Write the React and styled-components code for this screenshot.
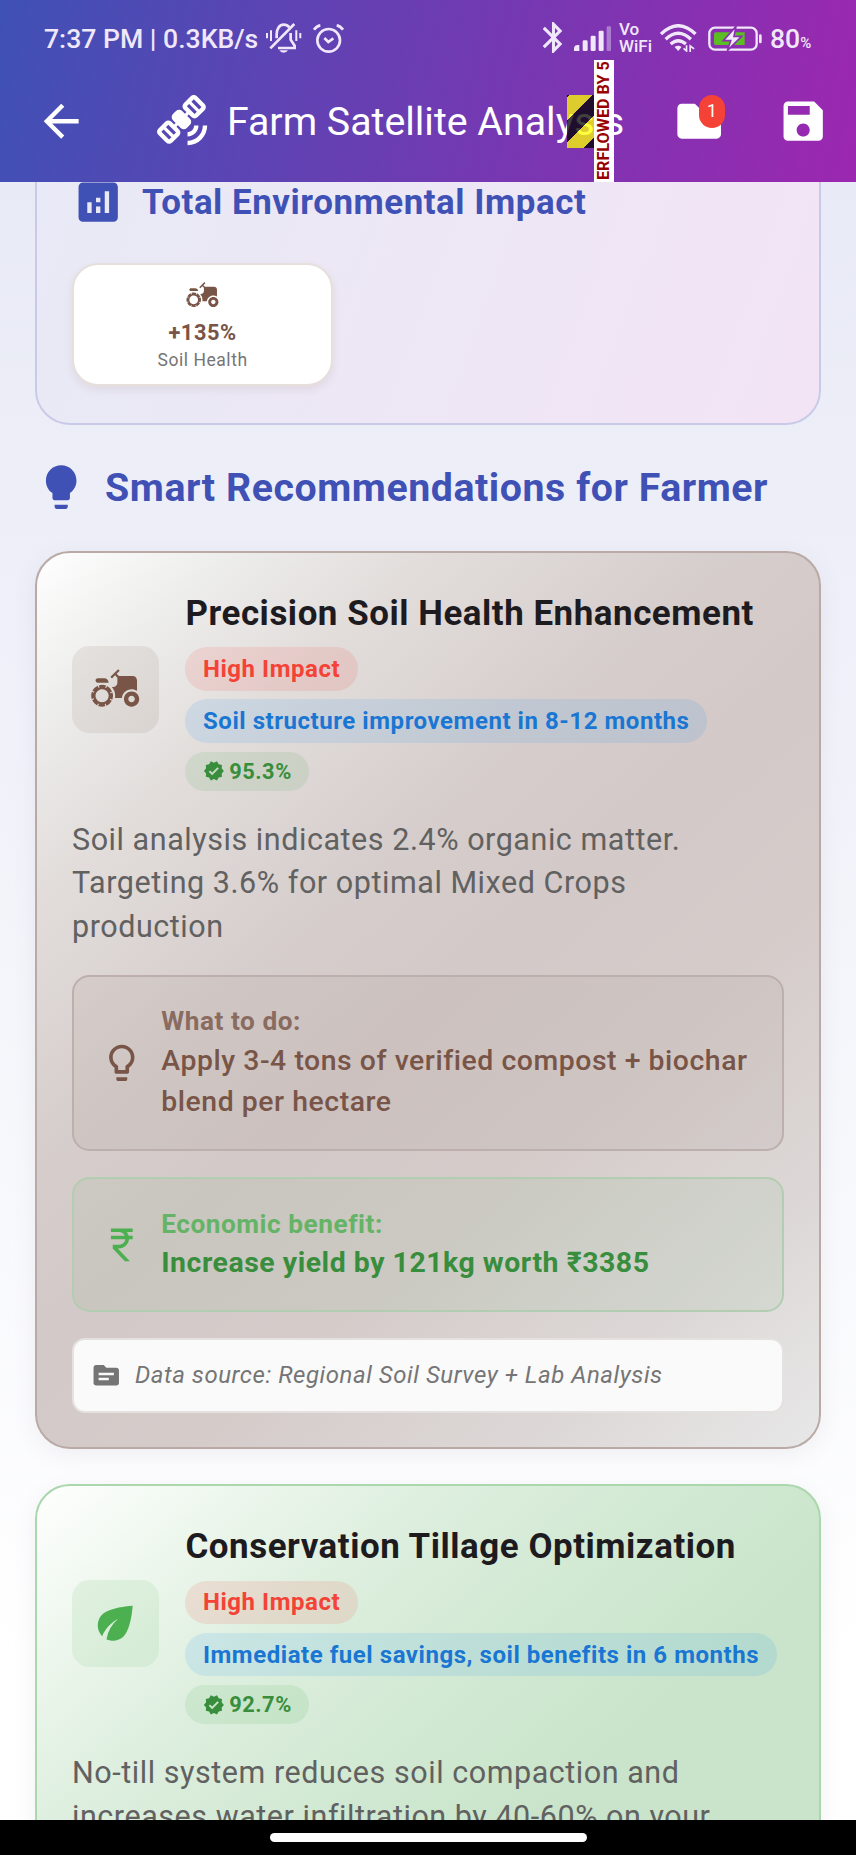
import styled, { createGlobalStyle } from "styled-components";
import {
    MdAgriculture, MdAnalytics, MdArrowBack, MdBluetooth, MdCurrencyRupee, MdEco,
    MdFolder, MdLightbulb, MdLightbulbOutline, MdSatelliteAlt, MdSave, MdSource, MdVerified,
} from "react-icons/md";

const GlobalStyle = createGlobalStyle`
    * { box-sizing: border-box; }
    body {
        margin: 0;
        font-family: Roboto, "Noto Sans", sans-serif;
        letter-spacing: 0.545px;
    }
    svg { display: block; flex: none; }
`;

const Screen = styled.div`
    width: 856px;
    height: 1855px;
    display: flex;
    flex-direction: column;
    overflow: hidden;
    background: #000;
`;

// header (status bar + app bar)
const Header = styled.header`
    flex: none;
    height: 182px;
    color: #fff;
    background: linear-gradient(102deg, #3f51b5, #9c27b0);
`;

const StatusBar = styled.div`
    height: 60px;
    padding: 17px 43px 0 44px;
    display: flex;
    justify-content: space-between;
    color: #f0e8fa;
    font-size: 26.6px;
    font-weight: 500;
    letter-spacing: 0;
`;

const StatusGroup = styled.div`
    height: 42px;
    display: flex;
    align-items: center;
    gap: ${(props) => props.$gap}px;
`;

const BluetoothIcon = styled(MdBluetooth)`
    margin: 0 -6px 2px 0;
`;

const VoWifi = styled.div`
    font-size: 17px;
    line-height: 17px;
    width: 34px;
`;

const Percent = styled.span`
    width: 43px;
    padding-top: 1px;
    font-size: 26.6px;
    white-space: nowrap;
    small { font-size: 15px; }
`;

const AppBar = styled.div`
    height: 122px;
    display: flex;
    align-items: center;
`;

const IconButton = styled.div`
    width: ${(props) => props.$width || 104.7}px;
    height: 104px;
    display: flex;
    align-items: center;
    justify-content: center;
    position: relative;
`;

const TitleRow = styled.div`
    position: relative;
    width: 456.5px;
    height: 122px;
    margin: 0 33.1px 0 35px;
    display: flex;
    align-items: center;
    gap: 17.5px;
`;

const Title = styled.h1`
    margin: 0;
    padding-top: 2px;
    font-size: 39.3px;
    font-weight: 400;
    letter-spacing: 0;
    white-space: nowrap;
`;

const OverflowStripes = styled.div`
    position: absolute;
    right: 19px;
    top: 35px;
    width: 28px;
    height: 53px;
    background: linear-gradient(135deg,
        rgba(0, 0, 0, 0.75) 1.5px, rgba(255, 255, 0, 0.75) 1.5px 17.9px,
        rgba(0, 0, 0, 0.75) 17.9px 33.4px, rgba(255, 255, 0, 0.75) 33.4px 49.4px,
        rgba(0, 0, 0, 0.75) 49.4px);
`;

const OverflowLabel = styled.div`
    position: absolute;
    right: 0;
    top: 0;
    width: 20px;
    height: 122px;
    overflow: hidden;
    background: #fff;
    color: #900;
    font-size: 16.2px;
    font-weight: 700;
    line-height: 20px;
    letter-spacing: 0;
    white-space: nowrap;
    writing-mode: vertical-rl;
    transform: rotate(180deg);
    padding-top: 2px;
`;

const Badge = styled.span`
    position: absolute;
    left: 52.5px;
    top: 26px;
    width: 26px;
    height: 33px;
    border-radius: 13px;
    background: #f44336;
    font-size: 17.5px;
    line-height: 33px;
    text-align: center;
`;

// scrolled page content
const Content = styled.main`
    flex: 1;
    min-height: 0;
    overflow: hidden;
    padding: 0 35.3px;
    background: linear-gradient(#e8eaf6, #fff 90%);
`;

const ImpactPanel = styled.section`
    margin-top: -42px;
    height: 284.5px;
    padding: 34px 35px;
    border: 2.2px solid #c9cae8;
    border-radius: 35px;
    background: linear-gradient(110deg, #e8eaf6, #f3e4f5);
`;

const PanelTitle = styled.h2`
    margin: 0 0 35px;
    display: flex;
    align-items: center;
    gap: 17.4px;
    height: 52.4px;
    color: #3f51b5;
    font-size: 34.9px;
    font-weight: 700;
`;

const ImpactTile = styled.div`
    width: 260.5px;
    height: 122.6px;
    padding-top: 12.3px;
    display: flex;
    flex-direction: column;
    align-items: center;
    border: 2.2px solid #e6dfdc;
    border-radius: 26px;
    background: #fff;
    box-shadow: 0 4px 9px rgba(121, 85, 72, 0.1);
    color: #795548;
`;

const TileValue = styled.div`
    margin-top: 4px;
    font-size: 21.8px;
    line-height: 31.2px;
    font-weight: 700;
`;

const TileLabel = styled.div`
    font-size: 17.5px;
    line-height: 25px;
    color: #757575;
`;

const SectionTitle = styled.h2`
    margin: 35px 0;
    display: flex;
    align-items: center;
    gap: 17.4px;
    color: #3f51b5;
    font-size: 39.3px;
    line-height: 56.1px;
    font-weight: 700;
    white-space: nowrap;
`;

const tones = {
    brown: {
        main: "#795548",
        box: "rgba(121, 85, 72, 0.1)",
        border: "#b9aaa5",
        stops: "#fff, #ededec 11%, #e2dddb 22%, #d6cecc 38%, #d3c9c8 50%, #d5ccca 65%, #dcd7d6 83%, #e8e8e8",
    },
    green: {
        main: "#4caf50",
        box: "rgba(76, 175, 80, 0.1)",
        border: "#aad7ac",
        stops: "#fff, #eef7ee 11%, #deefdf 22%, #d0e8d1 38%, #c9e4ca 50%, #cae5cb",
    },
};

const Card = styled.article`
    height: 898.5px;
    margin-bottom: 35px;
    padding: 36px 34.7px 34px;
    border: 2.2px solid ${(props) => tones[props.$tone].border};
    border-radius: 35px;
    background: linear-gradient(138.8deg, ${(props) => tones[props.$tone].stops}) border-box;
    box-shadow: 0 6px 24px rgba(90, 80, 120, 0.08);
`;

const CardHead = styled.div`
    display: flex;
    align-items: center;
    gap: 26.2px;
    margin-bottom: 26.8px;
`;

const IconBox = styled.div`
    flex: none;
    width: 87.3px;
    height: 87.3px;
    display: flex;
    align-items: center;
    justify-content: center;
    border-radius: 17.5px;
    color: ${(props) => tones[props.$tone].main};
    background: ${(props) => tones[props.$tone].box};
`;

const CardTitle = styled.h3`
    margin: 0 0 8.7px;
    font-size: 34.9px;
    line-height: 49.9px;
    font-weight: 700;
    color: #1d1b20;
    white-space: nowrap;
`;

const Chips = styled.div`
    display: flex;
    flex-direction: column;
    align-items: flex-start;
    gap: 8.9px;
`;

const chipColors = {
    red: ["#f44336", "rgba(244, 67, 54, 0.12)"],
    blue: ["#1976d2", "rgba(33, 150, 243, 0.12)"],
    green: ["#388e3c", "rgba(76, 175, 80, 0.12)"],
};

const Chip = styled.span`
    display: flex;
    align-items: center;
    gap: 4.4px;
    height: ${(props) => (props.$small ? 39 : 43.4)}px;
    padding: 0 17.5px;
    border-radius: 26px;
    font-size: ${(props) => (props.$small ? 21.8 : 24)}px;
    font-weight: 700;
    white-space: nowrap;
    color: ${(props) => chipColors[props.$color][0]};
    background: ${(props) => chipColors[props.$color][1]};
`;

const Description = styled.p`
    margin: 0 0 26.2px;
    font-size: 30.5px;
    line-height: 43.6px;
    color: #616161;
`;

const Note = styled.div`
    display: flex;
    align-items: center;
    gap: 17.5px;
    margin-bottom: 26.7px;
    padding: 26.2px;
    border: 2.2px solid ${(props) => (props.$color === "green" ? "#b3cdb2" : "#bdafab")};
    border-radius: 17.5px;
    background: ${(props) => (props.$color === "green" ? "rgba(76, 175, 80, 0.07)" : "rgba(121, 85, 72, 0.065)")};
    color: ${(props) => (props.$color === "green" ? "#4caf50" : "#795548")};
`;

const NoteLabel = styled.div`
    font-size: 26.2px;
    line-height: 37.4px;
    font-weight: 700;
    opacity: 0.8;
`;

const NoteText = styled.div`
    font-size: 28.4px;
    line-height: ${(props) => (props.$bold ? 40.5 : 41.2)}px;
    font-weight: ${(props) => (props.$bold ? 700 : 500)};
    color: ${(props) => (props.$bold ? "#388e3c" : "inherit")};
`;

const Source = styled.div`
    display: flex;
    align-items: center;
    gap: 13px;
    height: 74.2px;
    padding: 0 17.5px;
    border: 2.2px solid #e4e1e0;
    border-radius: 13px;
    background: #fafafa;
    color: #757575;
    font-size: 24px;
    font-style: italic;
`;

const NavBar = styled.footer`
    flex: none;
    height: 35px;
    display: flex;
    justify-content: center;
    background: #000;
`;

const Handle = styled.div`
    width: 317px;
    height: 9px;
    margin-top: 13px;
    border-radius: 5px;
    background: #fff;
`;

const MutedBell = () => (
    <svg width="35.3" height="30" viewBox="0 0 106 90" fill="none" stroke="currentColor" strokeWidth="8">
        <path d="M32 46V34C32 17 41 5 53 5C60 5 66 8 70 13M74 30V50L86 68V75H36" />
        <path d="M13 76L85 3" />
        <path d="M3 30V46M15 22V54M91 22V54M103 30V46" strokeWidth="6" />
        <path d="M40 82H66Q62 89 53 89Q44 89 40 82Z" fill="currentColor" stroke="none" />
    </svg>
);

const AlarmClock = () => (
    <svg width="31" height="29" viewBox="0 0 93 87" fill="none" stroke="currentColor" strokeWidth="8">
        <circle cx="47" cy="49" r="34" />
        <path d="M34 42L46 54L61 43M3 17Q11 6 22 4M71 4Q82 6 90 17" />
    </svg>
);

const Signal = () => (
    <svg width="37.3" height="25" viewBox="0 0 112 75" fill="currentColor">
        <path d="M0 75V65Q1 58 10 57H16V75Z" />
        <rect x="26" y="43" width="15" height="32" rx="4" />
        <rect x="50" y="29" width="15" height="46" rx="4" />
        <rect x="74" y="14" width="15" height="61" rx="4" />
        <rect x="98" y="1" width="14" height="74" rx="4" opacity="0.4" />
    </svg>
);

const WifiIcon = styled.svg`
    margin: 0 3.5px 0 -1px;
`;

const Wifi = () => (
    <WifiIcon width="36.5" height="28" viewBox="0 0 110 84" fill="none" stroke="currentColor" strokeWidth="10">
        <path d="M3 30Q55 -20 107 30M17 46Q55 10 93 46M32 60Q55 40 78 60" />
        <path d="M44 69Q55 61 65 69L55 81Z" fill="currentColor" stroke="none" />
        <path d="M80 64V81L71 73M91 84V66L103 75" strokeWidth="5" />
    </WifiIcon>
);

const Battery = () => (
    <svg width="54" height="25" viewBox="0 0 162 75">
        <rect x="4" y="5" width="142" height="66" rx="17" fill="none" stroke="currentColor" strokeWidth="7" />
        <rect x="153" y="25" width="8" height="27" rx="4" fill="currentColor" />
        <path d="M24 19H110V57H24Q18 57 18 51V25Q18 19 24 19Z" fill="#5cbd22" />
        <path d="M84 1L46 44H68L58 74L101 31H78Z" fill="currentColor" stroke="#8a2fb2" strokeWidth="5" />
    </svg>
);

const Recommendation = ({ tone, icon, title, time, score, description, children }) => (
    <Card $tone={tone}>
        <CardHead>
            <IconBox $tone={tone}>{icon}</IconBox>
            <div>
                <CardTitle>{title}</CardTitle>
                <Chips>
                    <Chip $color="red">High Impact</Chip>
                    <Chip $color="blue">{time}</Chip>
                    <Chip $color="green" $small><MdVerified size={21.8} />{score}</Chip>
                </Chips>
            </div>
        </CardHead>
        <Description>{description}</Description>
        {children}
    </Card>
);

const App = () => {
    return (
        <>
            <GlobalStyle />
            <Screen>
                <Header>
                    <StatusBar>
                        <StatusGroup $gap={8}>
                            <span>7:37 PM | 0.3KB/s</span>
                            <StatusGroup $gap={11.5}>
                                <MutedBell />
                                <AlarmClock />
                            </StatusGroup>
                        </StatusGroup>
                        <StatusGroup $gap={8}>
                            <BluetoothIcon size={37} />
                            <Signal />
                            <VoWifi>Vo<br />WiFi</VoWifi>
                            <Wifi />
                            <Battery />
                            <Percent>80<small>%</small></Percent>
                        </StatusGroup>
                    </StatusBar>
                    <AppBar>
                        <IconButton $width={122}><MdArrowBack size={52.4} /></IconButton>
                        <TitleRow>
                            <MdSatelliteAlt size={52.4} />
                            <Title>Farm Satellite Analysis</Title>
                            <OverflowStripes />
                            <OverflowLabel>ERFLOWED BY 5</OverflowLabel>
                        </TitleRow>
                        <IconButton>
                            <MdFolder size={52.4} />
                            <Badge>1</Badge>
                        </IconButton>
                        <IconButton><MdSave size={52.4} /></IconButton>
                    </AppBar>
                </Header>
                <Content>
                    <ImpactPanel>
                        <PanelTitle><MdAnalytics size={52.4} />Total Environmental Impact</PanelTitle>
                        <ImpactTile>
                            <MdAgriculture size={34.9} />
                            <TileValue>+135%</TileValue>
                            <TileLabel>Soil Health</TileLabel>
                        </ImpactTile>
                    </ImpactPanel>
                    <SectionTitle><MdLightbulb size={52.4} />Smart Recommendations for Farmer</SectionTitle>
                    <Recommendation
                        tone="brown"
                        icon={<MdAgriculture size={52.4} />}
                        title="Precision Soil Health Enhancement"
                        time="Soil structure improvement in 8-12 months"
                        score="95.3%"
                        description="Soil analysis indicates 2.4% organic matter. Targeting 3.6% for optimal Mixed Crops production"
                    >
                        <Note $color="brown">
                            <MdLightbulbOutline size={43.6} />
                            <div>
                                <NoteLabel>What to do:</NoteLabel>
                                <NoteText>Apply 3-4 tons of verified compost + biochar blend per hectare</NoteText>
                            </div>
                        </Note>
                        <Note $color="green">
                            <MdCurrencyRupee size={43.6} />
                            <div>
                                <NoteLabel>Economic benefit:</NoteLabel>
                                <NoteText $bold>Increase yield by 121kg worth ₹3385</NoteText>
                            </div>
                        </Note>
                        <Source><MdSource size={30.5} />Data source: Regional Soil Survey + Lab Analysis</Source>
                    </Recommendation>
                    <Recommendation
                        tone="green"
                        icon={<MdEco size={52.4} />}
                        title="Conservation Tillage Optimization"
                        time="Immediate fuel savings, soil benefits in 6 months"
                        score="92.7%"
                        description="No-till system reduces soil compaction and increases water infiltration by 40-60% on your"
                    />
                </Content>
                <NavBar><Handle /></NavBar>
            </Screen>
        </>
    );
};

export default App;
